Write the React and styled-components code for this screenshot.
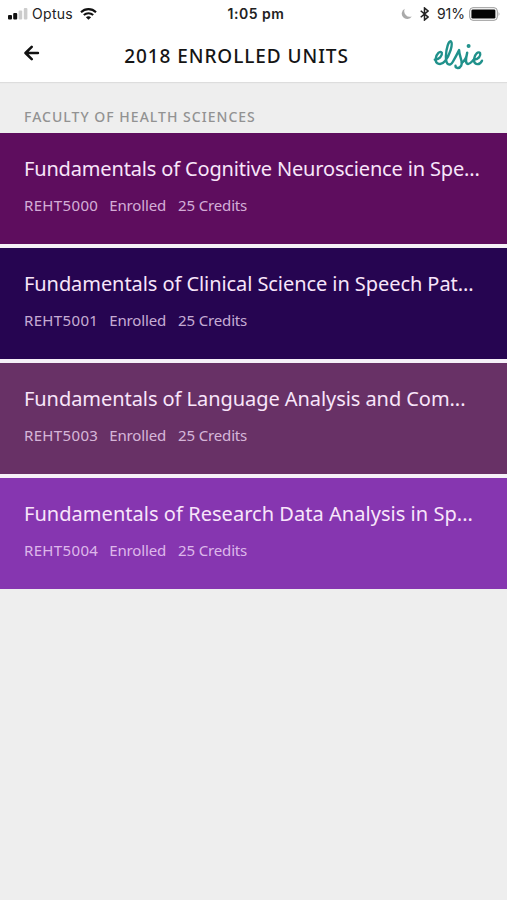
import React from 'react';
import styled, { createGlobalStyle } from 'styled-components';

const GlobalStyle = createGlobalStyle`
  * {
    box-sizing: border-box;
  }
  body {
    margin: 0;
    background: #eeeeee;
    font-family: 'Noto Sans', 'Open Sans', sans-serif;
  }
`;

const Screen = styled.div`
  min-height: 100vh;
  overflow: hidden;
  background: #eeeeee;
`;

const Header = styled.header`
  height: 82px;
  background: #ffffff;
  box-shadow: 0 1px 1px rgba(0, 0, 0, 0.07);
`;

const StatusBar = styled.div`
  display: grid;
  grid-template-columns: 1fr auto 1fr;
  align-items: center;
  height: 27px;
  padding: 0 6px 0 8px;
  font-family: Inter, sans-serif;
  font-size: 14px;
  color: #222222;
`;

const StatusGroup = styled.div`
  display: flex;
  align-items: center;
  justify-content: ${(props) => (props.$end ? 'flex-end' : 'flex-start')};
`;

const Carrier = styled.span`
  margin: 0 7px 0 4px;
  letter-spacing: 0.3px;
`;

const Clock = styled.span`
  padding-left: 3px;
  font-weight: 600;
  letter-spacing: 0.5px;
`;

const Charge = styled.span`
  margin: 0 4px 0 8px;
  letter-spacing: 0;
`;

const NavBar = styled.div`
  display: grid;
  grid-template-columns: 16px 1fr 50px;
  align-items: center;
  height: 55px;
  padding: 0 24px;
`;

const BackButton = styled.button`
  display: flex;
  padding: 0 0 4px;
  border: 0;
  background: none;
`;

const Title = styled.h1`
  margin: 0;
  padding-top: 2px;
  text-align: center;
  font-size: 19px;
  font-weight: 500;
  letter-spacing: 0.93px;
  white-space: nowrap;
  color: #151515;
`;

const Faculty = styled.h2`
  height: 51px;
  margin: 0;
  padding: 25px 24px 0;
  font-size: 14px;
  line-height: 20px;
  font-weight: 500;
  letter-spacing: 1.02px;
  color: #929292;
`;

const UnitList = styled.div`
  display: flex;
  flex-direction: column;
  gap: 4px;
  background: #f6f0f8;
`;

const Unit = styled.article`
  height: 111px;
  padding: 22px 24px 0;
  background: ${(props) => props.$color};
`;

const UnitName = styled.h3`
  margin: 0;
  font-size: 20px;
  line-height: 28px;
  font-weight: 400;
  letter-spacing: ${(props) => props.$tracking}px;
  white-space: nowrap;
  color: #f8e5fa;
`;

const Details = styled.div`
  display: flex;
  gap: 12px;
  margin-top: 12px;
  font-size: 15px;
  line-height: 20px;
  letter-spacing: -0.15px;
  color: rgba(250, 225, 255, 0.77);
`;

const Code = styled.span`
  margin-right: -1px;
  letter-spacing: 0.35px;
`;

const units = [
  {
    code: 'REHT5000',
    name: 'Fundamentals of Cognitive Neuroscience in Spe...',
    color: '#5e0d5e',
    tracking: -0.16,
  },
  {
    code: 'REHT5001',
    name: 'Fundamentals of Clinical Science in Speech Pat...',
    color: '#260551',
    tracking: -0.07,
  },
  {
    code: 'REHT5003',
    name: 'Fundamentals of Language Analysis and Com...',
    color: '#683166',
    tracking: -0.06,
  },
  {
    code: 'REHT5004',
    name: 'Fundamentals of Research Data Analysis in Sp...',
    color: '#8636b0',
    tracking: 0.04,
  },
];

const Signal = () => (
  <svg width="20" height="12" viewBox="0 0 20 12">
    <rect x="0" y="7" width="4" height="4.5" rx="1" fill="#111" />
    <rect x="5.2" y="5" width="4" height="6.5" rx="1" fill="#111" />
    <rect x="10.6" y="2.5" width="3.6" height="9" rx="1" fill="#ccc" />
    <rect x="15.8" y="0" width="3.6" height="11.5" rx="1" fill="#ccc" />
  </svg>
);

const Wifi = () => (
  <svg width="17" height="12" viewBox="0 0 17 12" fill="none" stroke="#111">
    <path d="M1 4.2C5.2.1 11.8.1 16 4.2" strokeWidth="2.1" />
    <path d="M3.8 7.1C6.5 4.6 10.5 4.6 13.2 7.1" strokeWidth="2" />
    <path d="M5.9 9.2C7.4 7.9 9.6 7.9 11.1 9.2L8.5 11.8Z" fill="#111" stroke="none" />
  </svg>
);

const Moon = () => (
  <svg width="11" height="12" viewBox="0 0 11 12">
    <path d="M3.8.8A5.4 5.4 0 1 0 10.8 8.4A5.6 5.6 0 0 1 3.8.8Z" fill="#aaa" />
  </svg>
);

const BluetoothIcon = styled.svg`
  margin-left: 8px;
`;

const Bluetooth = () => (
  <BluetoothIcon width="9" height="14" viewBox="0 0 9 14" fill="none" stroke="#222" strokeWidth="1.5">
    <path d="M.7 3.7L8 10L4.5 13V1L8 4L.7 10.3" />
  </BluetoothIcon>
);

const Battery = () => (
  <svg width="32" height="14" viewBox="0 0 32 14">
    <rect x=".7" y=".7" width="27.6" height="12.6" rx="3.3" fill="#fff" stroke="#999" />
    <rect x="2.4" y="2.4" width="24" height="9.2" rx="1.4" fill="#050505" />
    <path d="M29.6 4.8Q31.4 7 29.6 9.2Z" fill="#999" />
  </svg>
);

const BackArrow = () => (
  <svg width="17" height="16" viewBox="0 0 17 16" fill="none" stroke="#111" strokeWidth="2.7" strokeLinecap="round" strokeLinejoin="round">
    <path d="M8.2 1.4L1.6 8L8.2 14.6M2 8H14.8" />
  </svg>
);

// handwritten wordmark, drawn as pen strokes
const Logo = () => (
  <svg width="52" height="32" viewBox="0 0 52 32" fill="none" stroke="#20918b" strokeWidth="2.4" strokeLinecap="round" strokeLinejoin="round">
    <path d="M1.8 20.8C6 20.6 9.6 16.8 8.8 13.8C7.6 11 3 14.9 2.6 20.2C2.3 25.4 8.4 26.8 12.1 22.1C16.6 16.5 20.3 5.1 18 2.5C15.8.7 13.1 9.8 12.9 17.2C12.8 26.4 17 27.8 20 22.5C22.3 18.5 24.4 14.5 26.1 11.1C26.2 17.8 30.3 22.6 28.2 26.6C26.4 30.1 22.4 29.3 22.5 26.8" />
    <path d="M29 23.6C31.8 22 33.6 17.8 34.2 13.8C32.6 20.7 32.4 24.6 35 25C37.3 25.2 39.2 22 40.8 20.8C45.2 20.6 48.2 16.7 47.1 14.2C45.7 11.7 41.4 15 41 20.2C40.8 26.5 46.8 26.5 49 21.7" />
    <circle cx="35.6" cy="7.1" r=".8" fill="#20918b" />
  </svg>
);

const App = () => {
  return (
    <>
      <GlobalStyle />
      <Screen>
        <Header>
          <StatusBar>
            <StatusGroup>
              <Signal />
              <Carrier>Optus</Carrier>
              <Wifi />
            </StatusGroup>
            <Clock>1:05 pm</Clock>
            <StatusGroup $end>
              <Moon />
              <Bluetooth />
              <Charge>91%</Charge>
              <Battery />
            </StatusGroup>
          </StatusBar>
          <NavBar>
            <BackButton aria-label="Back">
              <BackArrow />
            </BackButton>
            <Title>2018 ENROLLED UNITS</Title>
            <Logo />
          </NavBar>
        </Header>
        <Faculty>FACULTY OF HEALTH SCIENCES</Faculty>
        <UnitList>
          {units.map((unit) => (
            <Unit key={unit.code} $color={unit.color}>
              <UnitName $tracking={unit.tracking}>{unit.name}</UnitName>
              <Details>
                <Code>{unit.code}</Code>
                <span>Enrolled</span>
                <span>25 Credits</span>
              </Details>
            </Unit>
          ))}
        </UnitList>
      </Screen>
    </>
  );
};

export default App;
